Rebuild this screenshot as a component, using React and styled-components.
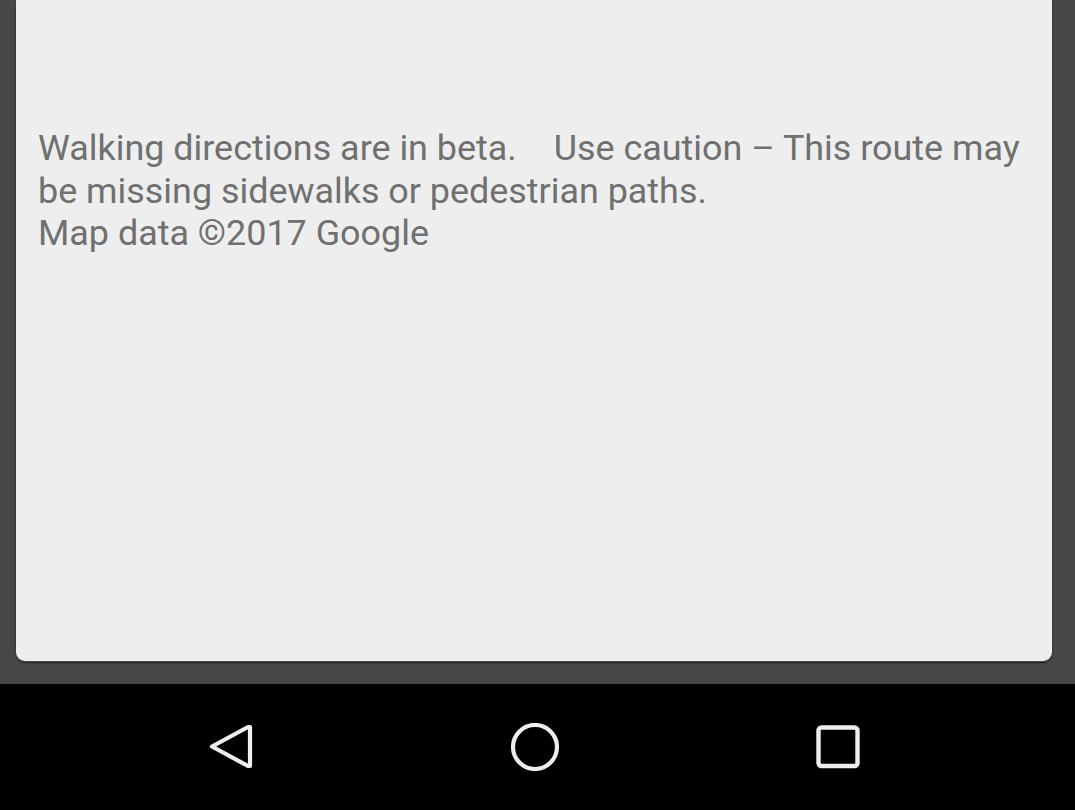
import React from "react";
import styled, { createGlobalStyle } from "styled-components";

const Global = createGlobalStyle`
  html, body { margin: 0; padding: 0; background: #474747; }
  body { font-family: Roboto, "Noto Sans", sans-serif; }
  * { box-sizing: border-box; }
`;

const Screen = styled.div`
  width: 1075px;
  height: 810px;
  display: flex;
  flex-direction: column;
  background: #474747;
  overflow: hidden;
`;

const Content = styled.div`
  flex: 1;
  display: flex;
  padding: 0 23px 23px 16px;
`;

const Card = styled.div`
  flex: 1;
  background: #eeeeee;
  border-radius: 0 0 9px 9px;
  box-shadow: 0 2px 2px rgba(0, 0, 0, 0.55), 0 1px 0 #9a9a9a;
  padding: 127px 20px 0 22px;
`;

const Notice = styled.p`
  margin: 0;
  font-family: Roboto, "Noto Sans", sans-serif;
  font-size: 35.9px;
  line-height: 42.5px;
  color: #707070;
`;

const Caution = styled.span`
  margin-left: 28px;
`;

const NavBar = styled.nav`
  height: 126px;
  background: #000;
  display: flex;
  align-items: center;
  justify-content: center;
  gap: 255px;
  padding-right: 5px;
`;

const NavButton = styled.div`
  width: 48px;
  height: 48px;
  display: flex;
  align-items: center;
  justify-content: center;
`;

export default function App() {
  return (
    <>
      <Global />
      <Screen>
        <Content>
          <Card>
            <Notice>
              Walking directions are in beta.{" "}
              <Caution>Use caution – This route may be missing sidewalks or pedestrian paths.</Caution>
              <br />
              Map data ©2017 Google
            </Notice>
          </Card>
        </Content>
        <NavBar>
          <NavButton>
            <svg width="48" height="48" viewBox="0 0 48 48">
              <path d="M42 5 L44 5 L44 44 L42 44 L6 24.5 Z" fill="none" stroke="#eeeeee" strokeWidth="4.2" strokeLinejoin="round" transform="translate(-2 -1)" />
            </svg>
          </NavButton>
          <NavButton>
            <svg width="48" height="48" viewBox="0 0 48 48">
              <circle cx="24" cy="24" r="22" fill="none" stroke="#eeeeee" strokeWidth="4.2" />
            </svg>
          </NavButton>
          <NavButton>
            <svg width="48" height="48" viewBox="0 0 48 48">
              <rect x="4.5" y="4.5" width="39" height="38.5" rx="3" fill="none" stroke="#eeeeee" strokeWidth="4.4" />
            </svg>
          </NavButton>
        </NavBar>
      </Screen>
    </>
  );
}
